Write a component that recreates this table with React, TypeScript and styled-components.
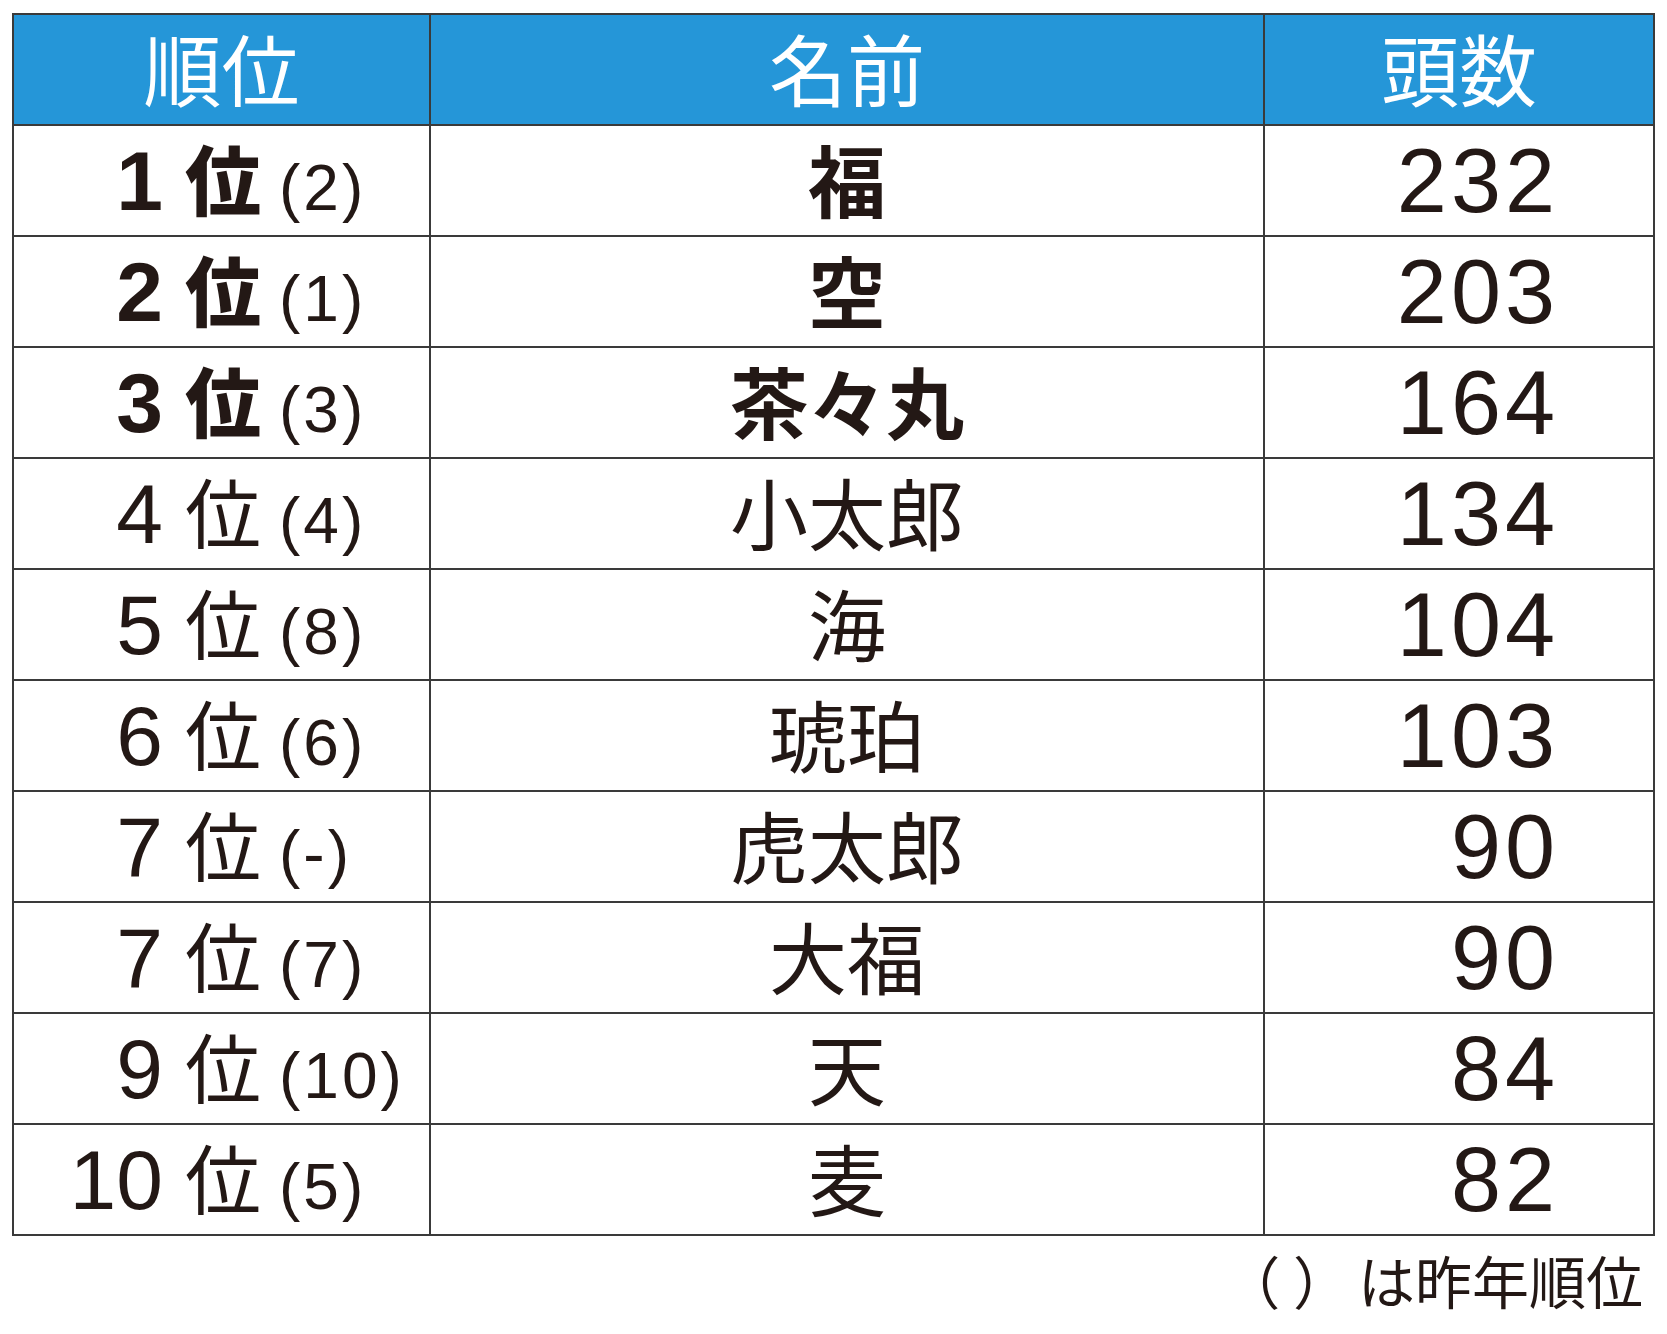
import styled, { createGlobalStyle } from "styled-components";

const GlobalStyle = createGlobalStyle`
    html, body {
        margin: 0;
        padding: 0;
        background: #ffffff;
    }
`;

const Page = styled.div`
    width: 1667px;
    padding: 13px 0 0 12px;
    box-sizing: border-box;
`;

const Table = styled.table`
    width: 1641px;
    table-layout: fixed;
    border-collapse: collapse;
    color: #231815;
`;

const HeadCell = styled.th`
    height: 103px;
    padding: 0 0 6px;
    background: #2596d8;
    border: 2px solid #3a3a3a;
    color: #ffffff;
    font-family: "Noto Sans CJK JP", sans-serif;
    font-size: 78px;
    font-weight: 400;
    line-height: 1;
    text-align: center;
    vertical-align: middle;
`;

const Cell = styled.td`
    height: 109px;
    padding: 0;
    border: 2px solid #3a3a3a;
    vertical-align: middle;
    line-height: 1;
`;

const RankLine = styled.div`
    display: flex;
    align-items: baseline;
`;

const Num = styled.span<{ $bold: boolean }>`
    width: 149px;
    text-align: right;
    font-family: "Liberation Sans", sans-serif;
    font-size: 84px;
    font-weight: ${(p) => (p.$bold ? 700 : 400)};
`;

const Kurai = styled.span<{ $bold: boolean }>`
    margin-left: 22px;
    font-family: "Noto Sans CJK JP", sans-serif;
    font-size: 76px;
    font-weight: ${(p) => (p.$bold ? 900 : 400)};
`;

const Prev = styled.span`
    margin-left: 18px;
    font-family: "Liberation Sans", sans-serif;
    font-size: 64px;
    letter-spacing: 3px;
    font-weight: 400;
`;

const Name = styled.div<{ $bold: boolean }>`
    padding-bottom: 6px;
    text-align: center;
    font-family: "Noto Sans CJK JP", sans-serif;
    font-size: 78px;
    font-weight: ${(p) => (p.$bold ? 700 : 400)};
`;

const Count = styled.div`
    text-align: right;
    padding-right: 94px;
    font-family: "Liberation Sans", sans-serif;
    font-size: 90px;
    letter-spacing: 4px;
`;

const Note = styled.p`
    width: 1641px;
    margin: 12px 0 0;
    padding-right: 10px;
    box-sizing: border-box;
    text-align: right;
    font-family: "Noto Sans CJK JP", sans-serif;
    font-size: 57px;
    line-height: 1.1;
    color: #231815;
`;

const Parens = styled.span`
    margin-right: 8px;
`;

const rows = [
    { rank: "1", prev: "(2)", name: "福", count: "232", top: true },
    { rank: "2", prev: "(1)", name: "空", count: "203", top: true },
    { rank: "3", prev: "(3)", name: "茶々丸", count: "164", top: true },
    { rank: "4", prev: "(4)", name: "小太郎", count: "134", top: false },
    { rank: "5", prev: "(8)", name: "海", count: "104", top: false },
    { rank: "6", prev: "(6)", name: "琥珀", count: "103", top: false },
    { rank: "7", prev: "(-)", name: "虎太郎", count: "90", top: false },
    { rank: "7", prev: "(7)", name: "大福", count: "90", top: false },
    { rank: "9", prev: "(10)", name: "天", count: "84", top: false },
    { rank: "10", prev: "(5)", name: "麦", count: "82", top: false },
];

export default function App(): JSX.Element {
    return (
        <Page>
            <GlobalStyle />
            <Table>
                <colgroup>
                    <col style={{ width: 417 }} />
                    <col style={{ width: 834 }} />
                    <col style={{ width: 390 }} />
                </colgroup>
                <thead>
                    <tr>
                        <HeadCell>順位</HeadCell>
                        <HeadCell>名前</HeadCell>
                        <HeadCell>頭数</HeadCell>
                    </tr>
                </thead>
                <tbody>
                    {rows.map((r, i) => (
                        <tr key={i}>
                            <Cell>
                                <RankLine>
                                    <Num $bold={r.top}>{r.rank}</Num>
                                    <Kurai $bold={r.top}>位</Kurai>
                                    <Prev>{r.prev}</Prev>
                                </RankLine>
                            </Cell>
                            <Cell>
                                <Name $bold={r.top}>{r.name}</Name>
                            </Cell>
                            <Cell>
                                <Count>{r.count}</Count>
                            </Cell>
                        </tr>
                    ))}
                </tbody>
            </Table>
            <Note>
                <Parens>（ ）</Parens>は昨年順位
            </Note>
        </Page>
    );
}
